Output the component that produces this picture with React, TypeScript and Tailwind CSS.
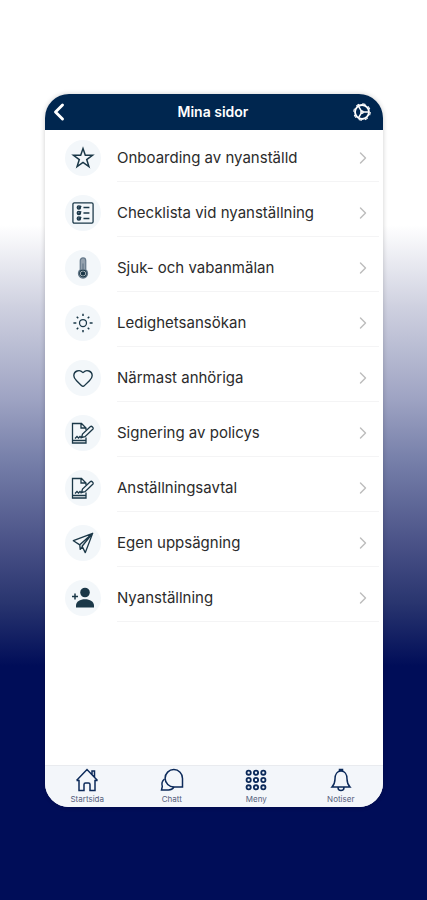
import React, { useState } from 'react';
import { ChevronLeft, ChevronRight, Heart } from 'lucide-react';

type IconProps = { className?: string };

const strokeProps = {
  viewBox: '0 0 24 24',
  fill: 'none',
  stroke: 'currentColor',
  strokeWidth: 1.5,
  'aria-hidden': true,
};

const CogIcon = ({ className }: IconProps) => (
  <svg {...strokeProps} strokeWidth={2} className={className}>
    <circle cx="12" cy="12" r="9.3" strokeWidth="2.5" />
    <circle cx="12" cy="12" r="11" strokeWidth="1.4" strokeDasharray="4.4 4.24" />
    <circle cx="12" cy="12" r="1.5" />
    <path d="M13.5 12H21M11.2 10.7L7.5 4.5M11.2 13.3L7.5 19.5" />
  </svg>
);

const StarIcon = ({ className }: IconProps) => (
  <svg {...strokeProps} className={className}>
    <path d="M12 2.5l2.3 6.8h7.2l-5.8 4.3 2.2 6.9-5.9-4.2-5.9 4.2 2.2-6.9-5.8-4.3h7.2z" />
  </svg>
);

const ChecklistIcon = ({ className }: IconProps) => (
  <svg {...strokeProps} strokeWidth={1.4} className={className}>
    <rect x="1" y="1" width="22" height="22" rx="1.5" />
    {[6, 12, 18].map((y) => (
      <g key={y}>
        <circle cx="7.5" cy={y} r="1.8" fill="#7d8ba3" />
        <path d={`M7 ${y}l1 .8 2-2.5M12.5 ${y}H19`} />
      </g>
    ))}
  </svg>
);

const ThermometerIcon = ({ className }: IconProps) => (
  <svg {...strokeProps} strokeWidth={1.3} className={className}>
    <path d="M9 14V4a3 3 0 0 1 6 0v10a5 5 0 1 1-6 0z" stroke="#65788a" fill="#94a1ae" />
    <circle cx="12" cy="18" r="3.6" fill="#ffffff" />
    <circle cx="12" cy="18" r="1.8" fill="currentColor" />
    <path d="M12 14V7" stroke="#65788a" />
  </svg>
);

const SunIcon = ({ className }: IconProps) => (
  <svg {...strokeProps} className={className}>
    <circle cx="12" cy="12" r="4.2" />
    <path
      strokeWidth="1.8"
      d="M12 1v2.5M12 20.5V23M.5 12H4M20 12h3.5M4.5 4.5l1.8 1.8M17.7 17.7l1.8 1.8M4.5 19.5l1.8-1.8M17.7 6.3l1.8-1.8"
    />
  </svg>
);

const SignIcon = ({ className }: IconProps) => (
  <svg {...strokeProps} strokeWidth={1.3} className={className}>
    <path d="M1.5 22V2.5h9L15 7v2M10 2.5V7h5M1.5 19.5H15V22H1.5zM15 16.5v3" />
    <path d="M10.5 16.5l1-3.5 8-7.5c1-.9 3.5 1.2 2.5 2.5l-8 7.7z" />
    <path d="M4 17.5l2-2 1.5 1.5L9 15.5l1.5 1.5" />
  </svg>
);

const PlaneIcon = ({ className }: IconProps) => (
  <svg {...strokeProps} strokeLinejoin="round" className={className}>
    <path d="M22.5 1.5l-21 8 7 4.5zM22.5 1.5l-8 21-3.5-7zM8.5 14l.5 5 2.5-3" />
  </svg>
);

const AddPersonIcon = ({ className }: IconProps) => (
  <svg viewBox="0 0 24 24" fill="currentColor" className={className} aria-hidden>
    <circle cx="14" cy="6.5" r="4.8" />
    <path d="M5 21.5v-2c0-4 4-6.3 9-6.3s9 2.3 9 6.3v2z" />
    <path d="M4 7.5v6M1 10.5h6" stroke="currentColor" strokeWidth="1.5" />
  </svg>
);

const HomeIcon = ({ className }: IconProps) => (
  <svg {...strokeProps} className={className}>
    <path d="M1.5 12.5l10.5-11 10.5 11M17 6.5V3h2.5v6M1.5 12.5H4v10h5v-6a1.500 1.500 0 0 1 1.5-1.5h3a1.5 1.5 0 0 1 1.5 1.5v6h5v-10h2.5" />
  </svg>
);

const ChatIcon = ({ className }: IconProps) => (
  <svg {...strokeProps} className={className}>
    <path d="M22.5 19H14a8.7 8.7 0 1 1 8.5-8.500z" />
    <path d="M4.5 11a7 7 0 0 0-2.2 7.500L1.5 22h7a7 7 0 0 0 5.500-3" />
  </svg>
);

const GridIcon = ({ className }: IconProps) => (
  <svg {...strokeProps} strokeWidth={2} className={className}>
    {[4, 12, 20].map((y) => [4, 12, 20].map((x) => <circle key={`${x}-${y}`} cx={x} cy={y} r="2.3" />))}
  </svg>
);

const BellIcon = ({ className }: IconProps) => (
  <svg {...strokeProps} className={className}>
    <path d="M10.5 3V1.5h3V3M3 19c1.8-2 3-4 3-8 0-5 2.5-8 6-8s6 3 6 8c0 4 1.2 6 3 8zM9 19.5a3 3 0 0 0 6 0" />
  </svg>
);

const HeartIcon = ({ className }: IconProps) => <Heart className={className} strokeWidth={1.5} />;

const menuItems = [
  { label: 'Onboarding av nyanställd', icon: StarIcon, size: 'size-6' },
  { label: 'Checklista vid nyanställning', icon: ChecklistIcon, size: 'size-[22px]' },
  { label: 'Sjuk- och vabanmälan', icon: ThermometerIcon, size: 'size-[22px]' },
  { label: 'Ledighetsansökan', icon: SunIcon, size: 'size-5' },
  { label: 'Närmast anhöriga', icon: HeartIcon, size: 'size-[22px]' },
  { label: 'Signering av policys', icon: SignIcon, size: 'size-6' },
  { label: 'Anställningsavtal', icon: SignIcon, size: 'size-6' },
  { label: 'Egen uppsägning', icon: PlaneIcon, size: 'size-[22px]' },
  { label: 'Nyanställning', icon: AddPersonIcon, size: 'size-6' },
];

const tabs = [
  { label: 'Startsida', icon: HomeIcon, size: 'size-6' },
  { label: 'Chatt', icon: ChatIcon, size: 'size-6' },
  { label: 'Meny', icon: GridIcon, size: 'size-[22px]' },
  { label: 'Notiser', icon: BellIcon, size: 'size-6' },
];

const App: React.FC = () => {
  const [activeTab, setActiveTab] = useState<string>('Meny');

  return (
    <div className="flex min-h-screen flex-col bg-[linear-gradient(to_bottom,#ffffff_25%,#cfd1e0_34%,#a0a5c4_44%,#7780aa_51%,#474f85_61%,#29356f_67%,#000d58_74%)] pt-[94px] pr-11 pb-[93px] pl-[45px] font-['Inter','Liberation_Sans',sans-serif]">
      <div className="flex flex-1 flex-col overflow-hidden rounded-3xl bg-white shadow-[0_0_5px_rgba(0,0,0,0.2)]">
        <header className="flex h-9 items-center justify-between bg-[#00264f] pr-3 pl-2 text-white">
          <button type="button" aria-label="Tillbaka" className="-ml-2">
            <ChevronLeft className="size-7" strokeWidth={2.5} />
          </button>
          <h1 className="text-sm font-semibold">Mina sidor</h1>
          <button type="button" aria-label="Inställningar">
            <CogIcon className="size-[18px]" />
          </button>
        </header>

        <ul className="flex flex-1 flex-col gap-[13px] pt-2.5 pr-1 pl-5">
          {menuItems.map(({ label, icon: Icon, size }) => (
            <li key={label}>
              <button type="button" className="flex w-full items-start gap-4 text-left">
                <span className="flex size-9 shrink-0 items-center justify-center rounded-full bg-[#f3f7fa] text-[#1b3848]">
                  <Icon className={size} />
                </span>
                <span className="flex h-[42px] flex-1 items-center justify-between border-b border-[#f4f4f5] pr-1.5 pb-[5px] text-[15px] text-[#2b2b2b]">
                  {label}
                  <ChevronRight className="size-5 text-[#bdbdbd]" strokeWidth={1.7} />
                </span>
              </button>
            </li>
          ))}
        </ul>

        <nav className="grid h-[42px] grid-cols-4 border-t border-[#e9ebef] bg-[#f3f6fa]">
          {tabs.map(({ label, icon: Icon, size }) => (
            <button
              key={label}
              type="button"
              aria-current={activeTab === label ? 'page' : undefined}
              onClick={() => setActiveTab(label)}
              className="flex flex-col items-center pt-px text-[#0c2a5a]"
            >
              <span className="flex h-[26px] items-center">
                <Icon className={size} />
              </span>
              <span className="text-[8px] leading-3 text-[#55607c]">{label}</span>
            </button>
          ))}
        </nav>
      </div>
    </div>
  );
};

export default App;
